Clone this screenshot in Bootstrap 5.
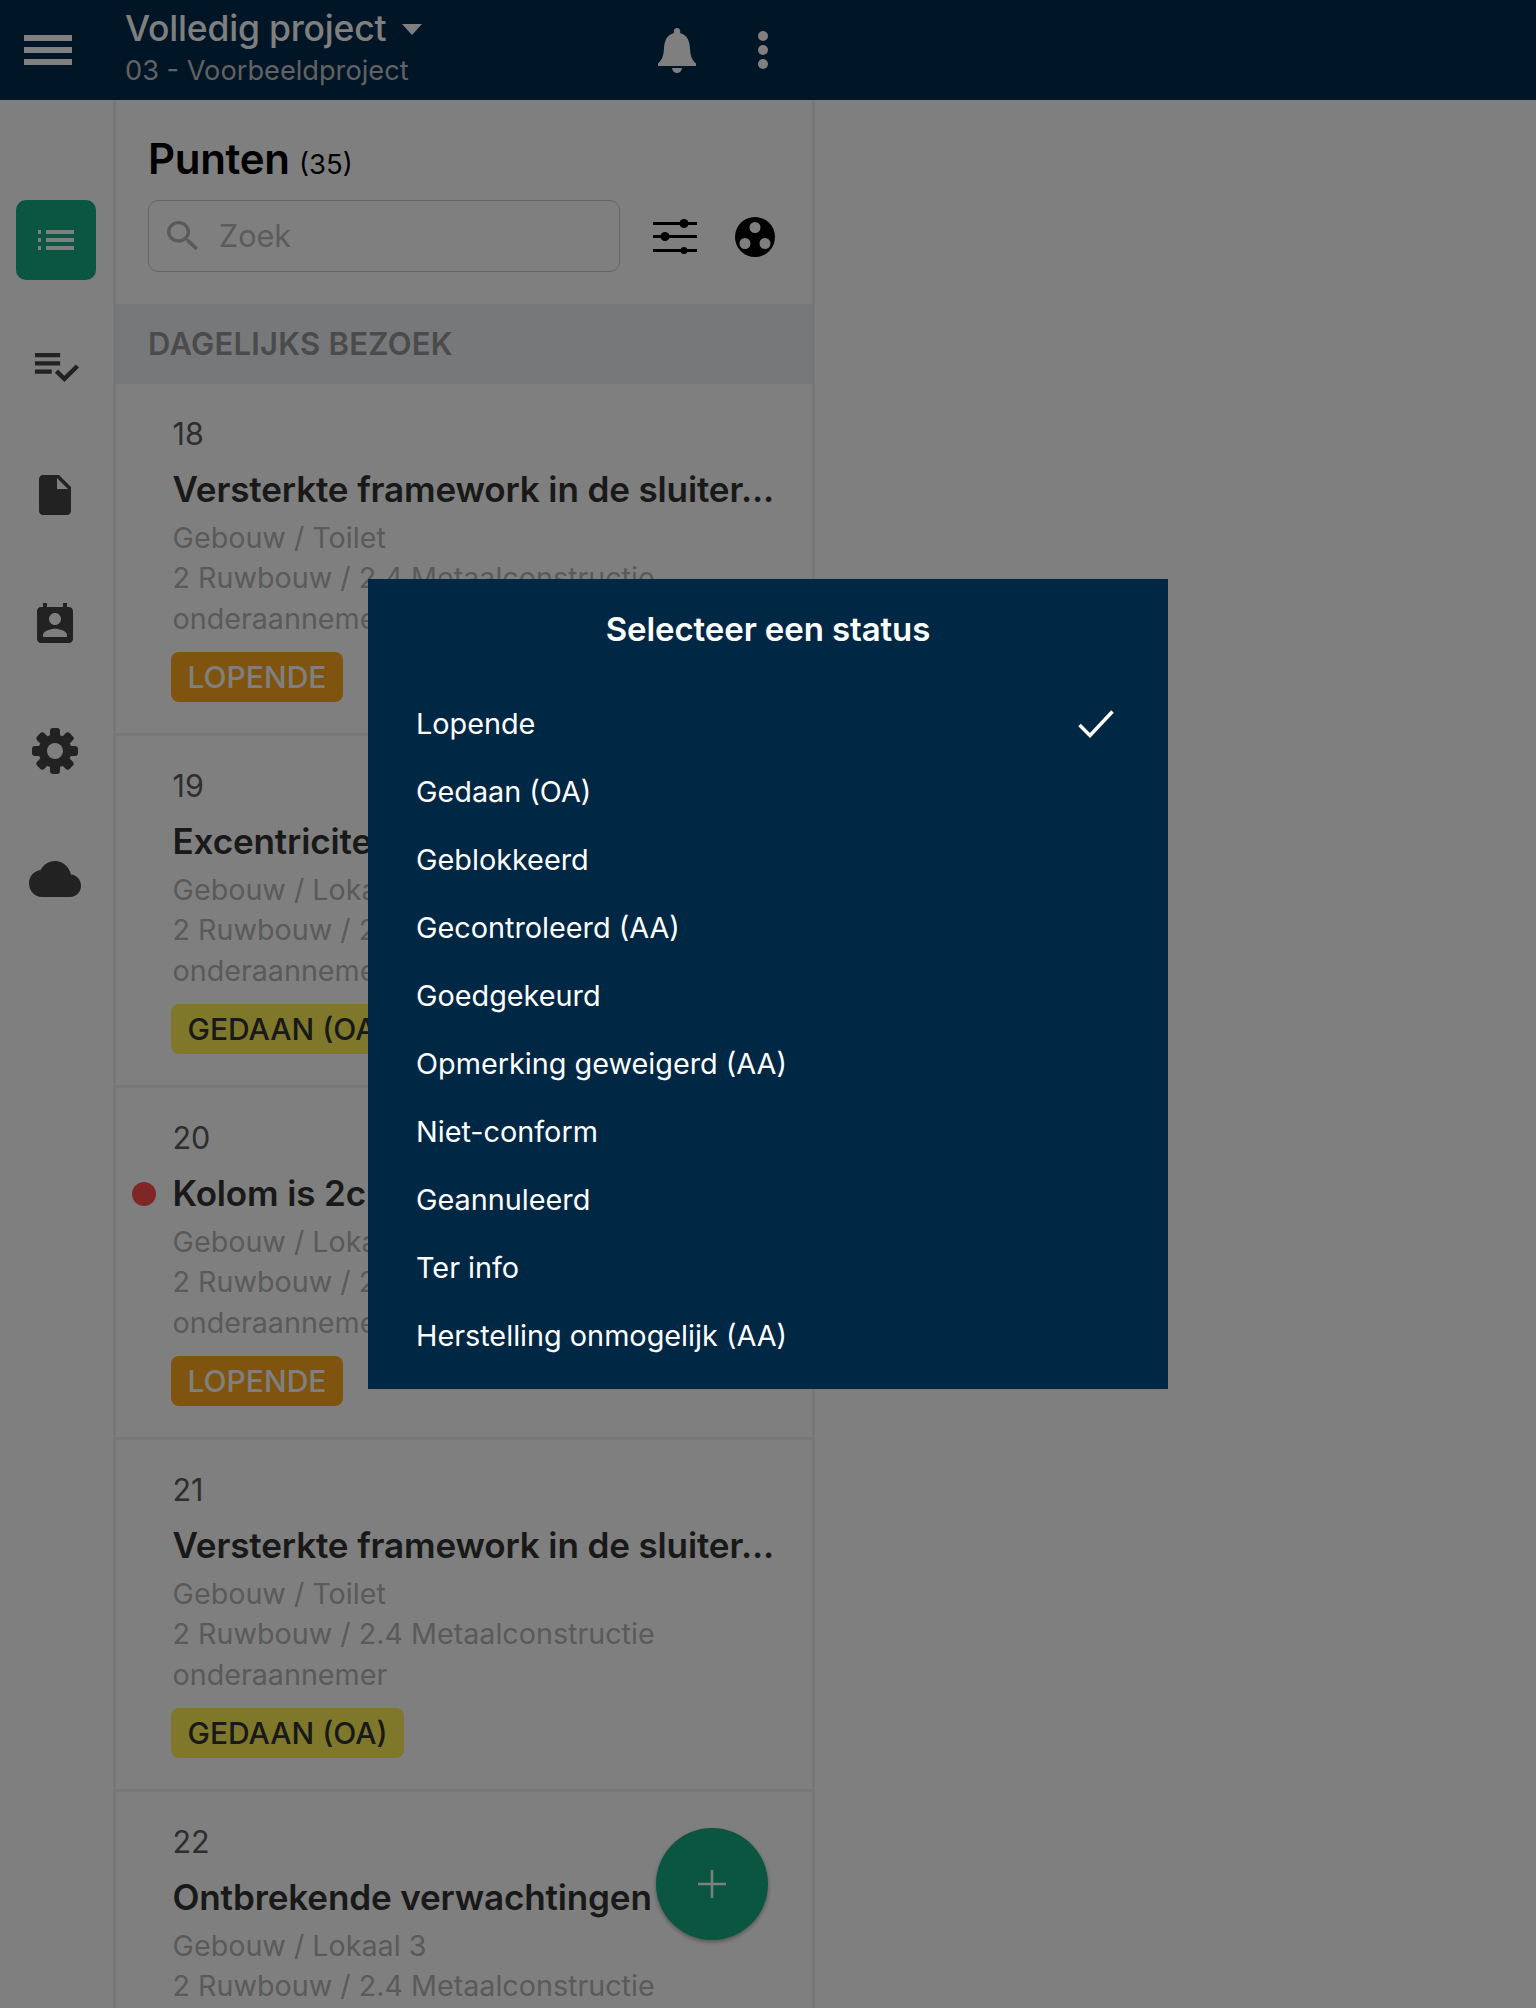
<!DOCTYPE html>
<html lang="nl">
<head>
<meta charset="utf-8">
<title>Punten</title>
<link href="https://cdn.jsdelivr.net/npm/bootstrap@5.3.0/dist/css/bootstrap.min.css" rel="stylesheet">
<style>
html,body{height:2008px;overflow:hidden;background:#fff;font-family:Inter,"Liberation Sans",sans-serif;}
.topbar{height:100px;background:#002a4b;color:#fff;padding-left:24px;}
.burger{width:48px;height:30px;display:flex;flex-direction:column;justify-content:space-between;}
.burger i{display:block;height:6px;background:#fff;}
.titles{margin-left:53px;width:539px;margin-top:-7px;}
.proj{font-size:35.5px;font-weight:500;line-height:48px;letter-spacing:-.2px;white-space:nowrap;}
.caret-d{display:inline-block;width:0;height:0;border-left:10.500px solid transparent;border-right:10.500px solid transparent;border-top:11px solid #fff;margin-left:16px;vertical-align:6px;}
.sub{font-size:27.2px;line-height:36px;color:#c4c4c4;white-space:nowrap;}
.bell{width:38px;height:45px;margin-left:-6px;}
.dots{width:12px;height:38px;margin-left:61px;}
.shell{height:1908px;}
.rail{width:113px;flex:none;padding-top:100px;}
.rail-btn{width:80px;height:80px;margin-left:16px;margin-bottom:23px;border-radius:10px;background:#14ac80;}
.rail-ic{height:128px;}
.listpane{width:702px;flex:none;border-left:3px solid #eee;border-right:3px solid #eee;overflow:hidden;}
.pane-head{padding:31px 0 0 32px;height:204px;}
.pane-title{font-size:42px;font-weight:600;line-height:56px;color:#000;letter-spacing:-.3px;}
.pane-title small{font-size:27.5px;font-weight:400;letter-spacing:0;margin-left:-1px;}
.searchbox{width:472px;height:72px;border:1.5px solid #cfcfcf;border-radius:10px;margin-top:8px;padding-left:18px;font-size:30.5px;color:#b8b8b8;}
.band{height:80px;background:#eef1f4;color:#969696;font-size:31px;font-weight:600;padding-left:32px;letter-spacing:.25px;}
.pt{height:352px;border-bottom:3px solid #eee;padding:30px 0 0 56.5px;position:relative;}
.pt-num{font-size:30.5px;line-height:40px;color:#5c5c5c;}
.pt-title{font-size:35.1px;font-weight:600;line-height:46px;margin-top:12px;color:#333;white-space:nowrap;letter-spacing:-.15px;}
.pt-meta{font-size:28.7px;line-height:40.4px;color:#b4b4b4;margin-top:6px;}
.tag{display:inline-block;height:50px;line-height:50px;padding:0 16.5px;border-radius:8px;font-size:30px;font-weight:500;margin-top:13px;margin-left:-1.500px;}
.tag-run{background:#ffa81f;color:#fff;}
.tag-done{background:#ffee55;color:#333;}
.reddot{position:absolute;left:16px;top:94px;width:24px;height:24px;border-radius:50%;background:#ff4d4d;}
.fab{position:absolute;left:656px;top:1828px;width:112px;height:112px;border-radius:50%;background:#14ac80;box-shadow:0 2px 4px rgba(0,0,0,.35);z-index:5;}
.sheet{width:800px;max-width:800px;margin:579px auto 0;}
.sheet .modal-content{background:#002845;color:#fff;border:0;border-radius:0;height:810px;}
.sheet-title{font-size:33px;font-weight:600;line-height:50px;text-align:center;padding-top:25px;letter-spacing:-.1px;}
.opts{margin-top:36px;}
.opts .list-group-item{background:transparent;border:0;color:#fff;font-size:28.8px;line-height:44px;height:68px;padding:12px 48px;display:flex;justify-content:space-between;align-items:center;}
.fillw{flex:1 1 auto;background:#fff;}
</style>
</head>
<body>
<header class="topbar d-flex align-items-center">
  <div class="burger"><i></i><i></i><i></i></div>
  <div class="titles">
    <div class="proj">Volledig project<span class="caret-d"></span></div>
    <div class="sub">03 - Voorbeeldproject</div>
  </div>
  <svg class="bell" viewBox="0 0 38 45"><path fill="#fff" d="M19 0c2 0 3.200 1.400 3.200 3.200v2c7 1.600 9.300 7.500 9.800 15 .4 7 1.400 11 6 15.300v2.500H0v-2.500c4.600-4.300 5.600-8.300 6-15.300.5-7.500 2.800-13.400 9.800-15v-2C15.800 1.400 17 0 19 0z"/><path fill="#fff" d="M14 40h10c-.4 3-2.400 5-5 5s-4.600-2-5-5z"/></svg>
  <svg class="dots" viewBox="0 0 12 38"><ellipse cx="6" cy="5" rx="5" ry="5" fill="#fff"/><ellipse cx="6" cy="19" rx="5" ry="5" fill="#fff"/><ellipse cx="6" cy="33" rx="5" ry="5" fill="#fff"/></svg>
</header>

<div class="shell d-flex">
  <nav class="rail">
    <div class="rail-btn d-flex align-items-center justify-content-center">
      <svg width="36" height="20" viewBox="0 0 36 20"><g fill="#fff"><rect x="0" y="0" width="3" height="4"/><rect x="0" y="8" width="3" height="4"/><rect x="0" y="16" width="3" height="4"/><rect x="8" y="0" width="28" height="4"/><rect x="8" y="8" width="28" height="4"/><rect x="8" y="16" width="28" height="4"/></g></svg>
    </div>
    <div class="rail-ic d-flex justify-content-center align-items-center">
      <svg width="44" height="29" viewBox="2 6 21 14" preserveAspectRatio="none"><path fill="#444" d="M14 10H2v2h12v-2zm0-4H2v2h12V6zM2 16h8v-2H2v2zm19.500-4.500L23 13l-6.990 7-4.510-4.500L13 14l3.010 3 5.490-5.500z"/></svg>
    </div>
    <div class="rail-ic d-flex justify-content-center align-items-center">
      <svg width="32" height="40" viewBox="4 2 16 20" class="me-1"><path fill="#444" d="M6 2c-1.100 0-1.990.9-1.990 2L4 20c0 1.100.89 2 1.990 2H18c1.100 0 2-.9 2-2V8l-6-6H6zm7 7V3.500L18.500 9H13z"/></svg>
    </div>
    <div class="rail-ic d-flex justify-content-center align-items-center">
      <svg width="36" height="40" viewBox="3 1 18 20" class="me-1"><path fill="#444" d="M19 3h-1V1h-2v2H8V1H6v2H5c-1.110 0-2 .9-2 2v14c0 1.100.89 2 2 2h14c1.100 0 2-.9 2-2V5c0-1.100-.9-2-2-2zm-7 3c1.660 0 3 1.340 3 3s-1.340 3-3 3-3-1.340-3-3 1.340-3 3-3zm6 12H6v-1c0-2 4-3.100 6-3.100s6 1.100 6 3.100v1z"/></svg>
    </div>
    <div class="rail-ic d-flex justify-content-center align-items-center">
      <svg width="46" height="46" viewBox="-23 -23 46 46" class="me-1"><g fill="#444"><rect x="-5" y="-23" width="10" height="46" rx="3"/><rect x="-5" y="-23" width="10" height="46" rx="3" transform="rotate(45)"/><rect x="-5" y="-23" width="10" height="46" rx="3" transform="rotate(90)"/><rect x="-5" y="-23" width="10" height="46" rx="3" transform="rotate(135)"/></g><circle r="12" fill="none" stroke="#444" stroke-width="9"/><circle r="8" fill="#fff"/></svg>
    </div>
    <div class="rail-ic d-flex justify-content-center align-items-center">
      <svg width="52" height="36" viewBox="0 4 24 16" preserveAspectRatio="none" class="me-1"><path fill="#444" d="M19.350 10.040C18.670 6.590 15.640 4 12 4 9.110 4 6.600 5.640 5.350 8.040 2.340 8.360 0 10.910 0 14c0 3.310 2.690 6 6 6h13c2.760 0 5-2.240 5-5 0-2.640-2.050-4.780-4.650-4.960z"/></svg>
    </div>
  </nav>

  <main class="listpane">
    <div class="pane-head">
      <div class="pane-title">Punten <small>(35)</small></div>
      <div class="d-flex align-items-center">
        <div class="searchbox d-flex align-items-center">
          <svg width="32" height="30" viewBox="3 3 18 18" preserveAspectRatio="none" class="me-3"><path fill="#b5b5b5" d="M15.500 14h-.79l-.28-.27C15.410 12.590 16 11.110 16 9.500 16 5.910 13.090 3 9.500 3S3 5.910 3 9.500 5.910 16 9.500 16c1.610 0 3.090-.59 4.230-1.570l.27.28v.79l5 4.990L20.490 19l-4.990-5zm-6 0C7.010 14 5 11.990 5 9.500S7.010 5 9.500 5 14 7.010 14 9.500 11.990 14 9.500 14z"/></svg>
          <span class="ms-1">Zoek</span>
        </div>
        <svg width="44" height="36" viewBox="0 0 44 36" style="margin-left:33px;margin-top:7px"><g fill="#000"><rect y="4" width="44" height="3"/><rect y="17" width="44" height="3"/><rect y="31" width="44" height="3"/><circle cx="31" cy="5.500" r="4.500"/><circle cx="12" cy="18.500" r="4.500"/><circle cx="31" cy="32.500" r="3.500"/></g></svg>
        <svg width="40" height="40" viewBox="0 0 40 40" style="margin-left:38px;margin-top:10px"><path fill="#000" fill-rule="evenodd" d="M20 0a20 20 0 1 0 0 40a20 20 0 1 0 0-40zM20 5a5.500 5.500 0 1 1 0 11a5.500 5.500 0 1 1 0-11zM10 21a5.500 5.500 0 1 1 0 11a5.500 5.500 0 1 1 0-11zM30 21a5.500 5.500 0 1 1 0 11a5.500 5.500 0 1 1 0-11z"/></svg>
      </div>
    </div>
    <div class="band d-flex align-items-center">DAGELIJKS BEZOEK</div>

    <div class="pt">
      <div class="pt-num">18</div>
      <div class="pt-title">Versterkte framework in de sluiter...</div>
      <div class="pt-meta">Gebouw / Toilet<br>2 Ruwbouw / 2.4 Metaalconstructie<br>onderaannemer</div>
      <span class="tag tag-run">LOPENDE</span>
    </div>
    <div class="pt">
      <div class="pt-num">19</div>
      <div class="pt-title">Excentriciteit kolommen</div>
      <div class="pt-meta">Gebouw / Lokaal 1<br>2 Ruwbouw / 2.4 Metaalconstructie<br>onderaannemer</div>
      <span class="tag tag-done">GEDAAN (OA)</span>
    </div>
    <div class="pt">
      <span class="reddot"></span>
      <div class="pt-num">20</div>
      <div class="pt-title">Kolom is 2cm verschoven</div>
      <div class="pt-meta">Gebouw / Lokaal 2<br>2 Ruwbouw / 2.4 Metaalconstructie<br>onderaannemer</div>
      <span class="tag tag-run">LOPENDE</span>
    </div>
    <div class="pt">
      <div class="pt-num">21</div>
      <div class="pt-title">Versterkte framework in de sluiter...</div>
      <div class="pt-meta">Gebouw / Toilet<br>2 Ruwbouw / 2.4 Metaalconstructie<br>onderaannemer</div>
      <span class="tag tag-done">GEDAAN (OA)</span>
    </div>
    <div class="pt">
      <div class="pt-num">22</div>
      <div class="pt-title">Ontbrekende verwachtingen</div>
      <div class="pt-meta">Gebouw / Lokaal 3<br>2 Ruwbouw / 2.4 Metaalconstructie<br>onderaannemer</div>
    </div>
  </main>
  <div class="fillw"></div>
</div>

<button class="fab btn d-flex align-items-center justify-content-center p-0" type="button" aria-label="Toevoegen">
  <svg width="30" height="30" viewBox="0 0 30 30"><path stroke="#fff" stroke-width="2.500" d="M15 1v28M1 15h28"/></svg>
</button>

<div class="modal-backdrop show"></div>
<div class="modal d-block" role="dialog">
  <div class="modal-dialog sheet">
    <div class="modal-content">
      <div class="sheet-title">Selecteer een status</div>
      <ul class="list-group list-group-flush opts">
        <li class="list-group-item">Lopende
          <svg width="36" height="28" viewBox="0 0 36 28" style="margin-right:6px"><path fill="none" stroke="#fff" stroke-width="3.500" d="M1.500 15l10.500 10.500L34.500 1.500"/></svg>
        </li>
        <li class="list-group-item">Gedaan (OA)</li>
        <li class="list-group-item">Geblokkeerd</li>
        <li class="list-group-item">Gecontroleerd (AA)</li>
        <li class="list-group-item">Goedgekeurd</li>
        <li class="list-group-item">Opmerking geweigerd (AA)</li>
        <li class="list-group-item">Niet-conform</li>
        <li class="list-group-item">Geannuleerd</li>
        <li class="list-group-item">Ter info</li>
        <li class="list-group-item">Herstelling onmogelijk (AA)</li>
      </ul>
    </div>
  </div>
</div>
</body>
</html>
